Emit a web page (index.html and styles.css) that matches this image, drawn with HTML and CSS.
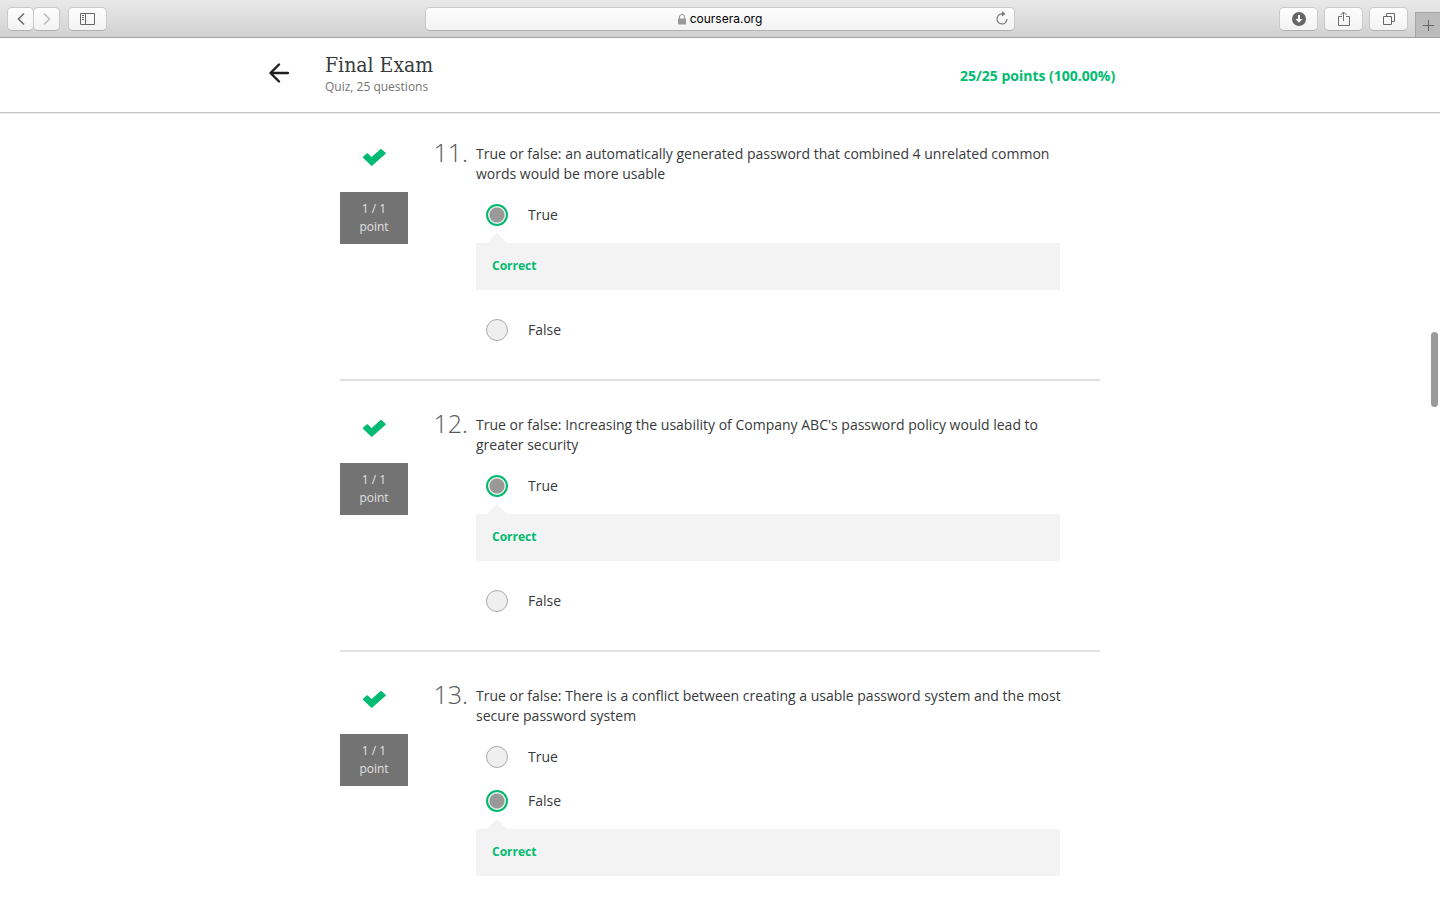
FILE: index.html
```html
<!DOCTYPE html>
<html lang="en">
<head>
<meta charset="utf-8">
<title>Final Exam | Coursera</title>
<link rel="stylesheet" href="styles.css">
</head>
<body>
<div class="toolbar">
  <div class="tools">
    <div class="nav-pair">
      <button class="tool nav" aria-label="Back"><svg width="8" height="14" viewBox="0 0 8 14" fill="none" stroke="#6b6b6b" stroke-width="1.6"><path d="M7 1.500 1.500 7 7 12.500"/></svg></button>
      <button class="tool nav" aria-label="Forward"><svg width="8" height="14" viewBox="0 0 8 14" fill="none" stroke="#bdbdbd" stroke-width="1.600"><path d="M1 1.500 6.500 7 1 12.500"/></svg></button>
    </div>
    <button class="tool" aria-label="Sidebar"><svg width="15" height="12" viewBox="0 0 15 12" fill="none" stroke="#666"><path d="M.5.5h14v11H.5zM5.500.500v11M2 2.500h2M2 4.500h2M2 6.500h2"/></svg></button>
  </div>
  <div class="address">
    <svg width="8" height="11" viewBox="0 0 8 11"><rect y="4.500" width="8" height="6" fill="#999"/><path d="M1.500 5V3a2.500 2.500 0 0 1 5 0v2" fill="none" stroke="#999"/></svg>
    <span>coursera.org</span>
    <button class="reload" aria-label="Reload"><svg width="12" height="14" viewBox="0 0 12 14"><path d="M6.500 3A5 5 0 1 0 11 8" fill="none" stroke="#777" stroke-width="1.200"/><path d="M6 0v5.500L9.500 3z" fill="#777"/></svg></button>
  </div>
  <div class="tools tools-right">
    <button class="tool" aria-label="Downloads"><svg width="14" height="14" viewBox="0 0 14 14"><circle cx="7" cy="7" r="7" fill="#666"/><path d="M6 3h2v4h2.500L7 10.800 3.500 7H6z" fill="#fff"/></svg></button>
    <button class="tool" aria-label="Share"><svg width="12" height="16" viewBox="0 0 12 16" fill="none" stroke="#707070"><path d="M4 5.500H.5v9h11v-9H8M5.500 10V1M2.500 4l3-3 3 3"/></svg></button>
    <button class="tool" aria-label="Show tabs"><svg width="12" height="12" viewBox="0 0 12 12" fill="none" stroke="#666"><path d="M.5 3.500h8v8h-8zM3.500 3.500v-3h8v8h-3"/></svg></button>
    <button class="new-tab" aria-label="New tab"><svg width="11" height="11" viewBox="0 0 11 11" stroke="#666"><path d="M5.500 0v11M0 5.500h11"/></svg></button>
  </div>
</div>
<header class="header">
  <div class="header-inner">
    <a class="back" href="#" aria-label="Back to course"><svg width="20" height="20" viewBox="0 0 20 20" fill="none" stroke="#1f1f1f" stroke-width="2.400" stroke-linecap="round" stroke-linejoin="round"><path d="M10 1.500 1.500 10l8.500 8.500M2 10h17"/></svg></a>
    <div class="heading"><h1>Final Exam</h1><p>Quiz, 25 questions</p></div>
    <strong class="score">25/25 points (100.00%)</strong>
  </div>
</header>
<main class="quiz">
  <section class="question">
    <div class="status">
      <svg width="23" height="17" viewBox="0 0 23 17" fill="#00bb71" stroke="#00bb71" stroke-width="2" stroke-linejoin="round"><path d="M1 8.300 4.300 5.300 8.500 9.500 18 1l3.700 3.300L8.700 15.700z"/></svg>
      <p class="points">1 / 1<br>point</p>
    </div>
    <span class="number">11.</span>
    <fieldset class="body">
      <legend>True or false: an automatically generated password that combined 4 unrelated common words would be more usable</legend>
      <label class="option"><input type="radio" name="q11" checked>True</label>
      <div class="feedback">Correct</div>
      <label class="option"><input type="radio" name="q11">False</label>
    </fieldset>
  </section>
  <section class="question">
    <div class="status">
      <svg width="23" height="17" viewBox="0 0 23 17" fill="#00bb71" stroke="#00bb71" stroke-width="2" stroke-linejoin="round"><path d="M1 8.300 4.300 5.300 8.500 9.500 18 1l3.700 3.300L8.700 15.700z"/></svg>
      <p class="points">1 / 1<br>point</p>
    </div>
    <span class="number">12.</span>
    <fieldset class="body">
      <legend>True or false: Increasing the usability of Company ABC's password policy would lead to greater security</legend>
      <label class="option"><input type="radio" name="q12" checked>True</label>
      <div class="feedback">Correct</div>
      <label class="option"><input type="radio" name="q12">False</label>
    </fieldset>
  </section>
  <section class="question">
    <div class="status">
      <svg width="23" height="17" viewBox="0 0 23 17" fill="#00bb71" stroke="#00bb71" stroke-width="2" stroke-linejoin="round"><path d="M1 8.300 4.300 5.300 8.500 9.500 18 1l3.700 3.300L8.700 15.700z"/></svg>
      <p class="points">1 / 1<br>point</p>
    </div>
    <span class="number">13.</span>
    <fieldset class="body">
      <legend>True or false: There is a conflict between creating a usable password system and the most secure password system</legend>
      <label class="option"><input type="radio" name="q13">True</label>
      <label class="option"><input type="radio" name="q13" checked>False</label>
      <div class="feedback">Correct</div>
    </fieldset>
  </section>
</main>
<div class="scroll-thumb"></div>
</body>
</html>
```
FILE: styles.css
```css
* { box-sizing: border-box; }

body {
  margin: 0;
  height: 100vh;
  display: flex;
  flex-direction: column;
  overflow: hidden;
  background: #fff;
  color: #373a3c;
  font: 14px/20px "Open Sans", "Noto Sans", sans-serif;
}

h1, p { margin: 0; font-weight: 400; }
svg { display: block; flex: none; }
button { font: inherit; padding: 0; border: 0; background: none; }

/* Browser toolbar */
.toolbar {
  flex: none;
  height: 38px;
  display: grid;
  grid-template-columns: 1fr minmax(200px, 590px) 1fr;
  border-bottom: 1px solid #a0a0a0;
  background: linear-gradient(#e9e9e9, #d1d1d1);
}
.tools { display: flex; gap: 8px; padding: 7px 7px 0; }
.nav-pair { display: flex; }
.tool {
  width: 39px;
  height: 24px;
  display: flex;
  align-items: center;
  justify-content: center;
  border: 1px solid #cacaca;
  border-bottom-color: #b0b0b0;
  border-radius: 5px;
  background: linear-gradient(#fefefe, #f3f3f3);
}
.nav { width: 27px; }
.nav + .nav { margin-left: -1px; }
.tools-right { justify-content: flex-end; gap: 6px; padding-right: 0; }
.new-tab {
  width: 25px;
  height: 25px;
  margin: 5px 0 0 1px;
  display: flex;
  align-items: center;
  justify-content: center;
  border: 1px solid #a5a5a5;
  border-width: 1px 0 0 1px;
  background: #bcbcbc;
}
.address {
  position: relative;
  height: 24px;
  margin-top: 7px;
  display: flex;
  align-items: center;
  justify-content: center;
  gap: 4px;
  border: 1px solid #cacaca;
  border-bottom-color: #b0b0b0;
  border-radius: 5px;
  background: linear-gradient(#fefefe, #f3f3f3);
  color: #000;
  font: 12px/20px Inter, sans-serif;
}
.reload { position: absolute; right: 6px; top: 3px; }

/* Quiz header */
.header { flex: none; border-bottom: 1px solid #c6c6c6; box-shadow: 0 1px 1px #eee; }
.header-inner {
  max-width: 902px;
  height: 74px;
  margin: 0 auto;
  display: flex;
  align-items: center;
}
.back { width: 56px; padding-bottom: 4px; }
.heading { flex: 1; padding-bottom: 2px; }
h1 { font: 21px/26px "DejaVu Serif Condensed", "DejaVu Serif", serif; }
.heading p { color: #757575; font-size: 12px; line-height: 18px; }
.score { width: 211px; padding-top: 2px; color: #00bb71; font-weight: 700; }

/* Questions */
.quiz { flex: 1; min-height: 0; overflow: hidden; padding-top: 31px; }
.question {
  max-width: 760px;
  margin: 0 auto;
  display: grid;
  grid-template-columns: 68px 60px minmax(0, 1fr);
  padding-bottom: 27px;
}
.question + .question { border-top: 2px solid #e1e1e1; padding-top: 34px; }
.status { display: flex; flex-direction: column; align-items: center; gap: 26px; padding-top: 5px; }
.points {
  width: 68px;
  padding: 8px 0;
  background: #737373;
  color: #e0e0e0;
  font-size: 12px;
  line-height: 18px;
  text-align: center;
}
.number { color: #55585a; font-size: 25px; line-height: 16px; font-weight: 300; text-align: right; }
.body { min-width: 0; margin: 0 0 0 8px; padding: 0; border: 0; }
legend { padding: 0 32px 9px 0; }
.option { height: 44px; display: flex; align-items: center; gap: 20px; padding-left: 10px; }
.option input {
  appearance: none;
  width: 22px;
  height: 22px;
  margin: 0;
  border: 1px solid #aaa;
  border-radius: 50%;
  background: #efefef;
}
.option input:checked {
  border: 2px solid #00bb71;
  background: radial-gradient(circle, #999 0 7px, #efefef 8px);
}
.feedback {
  position: relative;
  margin: 6px 40px 18px 0;
  padding: 13px 16px 14px;
  background: #f3f3f3;
  color: #00bb71;
  font-size: 12px;
  font-weight: 700;
}
.feedback::before {
  content: "";
  position: absolute;
  left: 11px;
  top: -10px;
  border: 10px solid transparent;
  border-top: 0;
  border-bottom-color: #f3f3f3;
}

.scroll-thumb {
  position: absolute;
  right: 2px;
  top: 332px;
  width: 7px;
  height: 75px;
  border-radius: 4px;
  background: #9b9b9b;
}
```
